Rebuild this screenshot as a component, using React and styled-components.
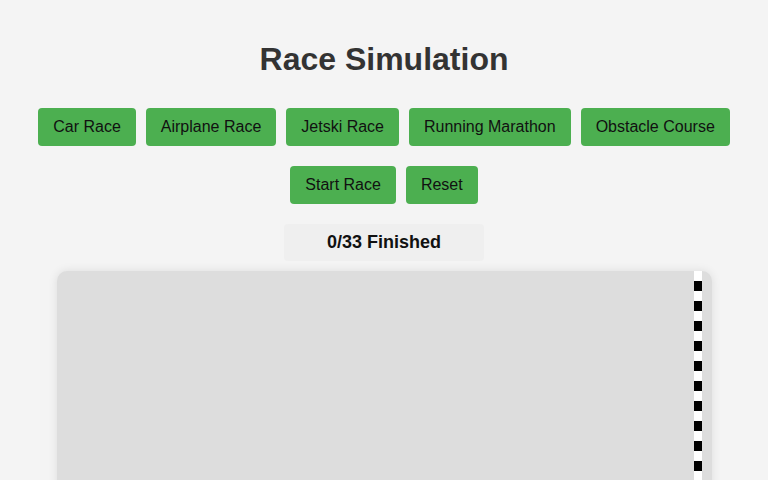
import React, { useState } from 'react';
import styled, { createGlobalStyle } from 'styled-components';

const Global = createGlobalStyle`
  html, body {
    margin: 0;
    background: #f4f4f4;
    font-family: "Liberation Sans", Arial, sans-serif;
    color: #333;
  }
`;

const Page = styled.div`
  display: flex;
  flex-direction: column;
  align-items: center;
  padding-top: 41px;
`;

const Title = styled.h1`
  margin: 0 0 30px;
  font-size: 32px;
  line-height: 37px;
  font-weight: bold;
  color: #333;
`;

const ButtonRow = styled.div`
  display: flex;
  justify-content: center;
  gap: 10px;
  margin-bottom: 20px;
`;

const Button = styled.button`
  background: #4caf50;
  color: #111;
  border: none;
  border-radius: 4px;
  padding: 10px 15px;
  font-family: "Liberation Sans", Arial, sans-serif;
  font-size: 16px;
  line-height: 18px;
  cursor: pointer;
`;

const Status = styled.div`
  width: 200px;
  height: 37px;
  display: flex;
  align-items: center;
  justify-content: center;
  background: #efefef;
  border-radius: 4px;
  font-size: 18px;
  font-weight: bold;
  color: #111;
  margin-bottom: 10px;
`;

const Track = styled.div`
  position: relative;
  width: 655px;
  height: 420px;
  background: #dddddd;
  border-radius: 10px;
  box-shadow: 0 0 10px rgba(0, 0, 0, 0.1);
`;

const FinishLine = styled.div`
  position: absolute;
  top: 0;
  bottom: 0;
  right: 10px;
  width: 8px;
  background: repeating-linear-gradient(
    to bottom,
    #fff 0,
    #fff 10px,
    #000 10px,
    #000 20px
  );
`;

const races = ['Car Race', 'Airplane Race', 'Jetski Race', 'Running Marathon', 'Obstacle Course'];

export default function App() {
  const [finished, setFinished] = useState(0);
  const total = 33;

  return (
    <Page>
      <Global />
      <Title>Race Simulation</Title>
      <ButtonRow>
        {races.map((r) => (
          <Button key={r}>{r}</Button>
        ))}
      </ButtonRow>
      <ButtonRow>
        <Button onClick={() => setFinished(0)}>Start Race</Button>
        <Button onClick={() => setFinished(0)}>Reset</Button>
      </ButtonRow>
      <Status>{finished}/{total} Finished</Status>
      <Track>
        <FinishLine />
      </Track>
    </Page>
  );
}
